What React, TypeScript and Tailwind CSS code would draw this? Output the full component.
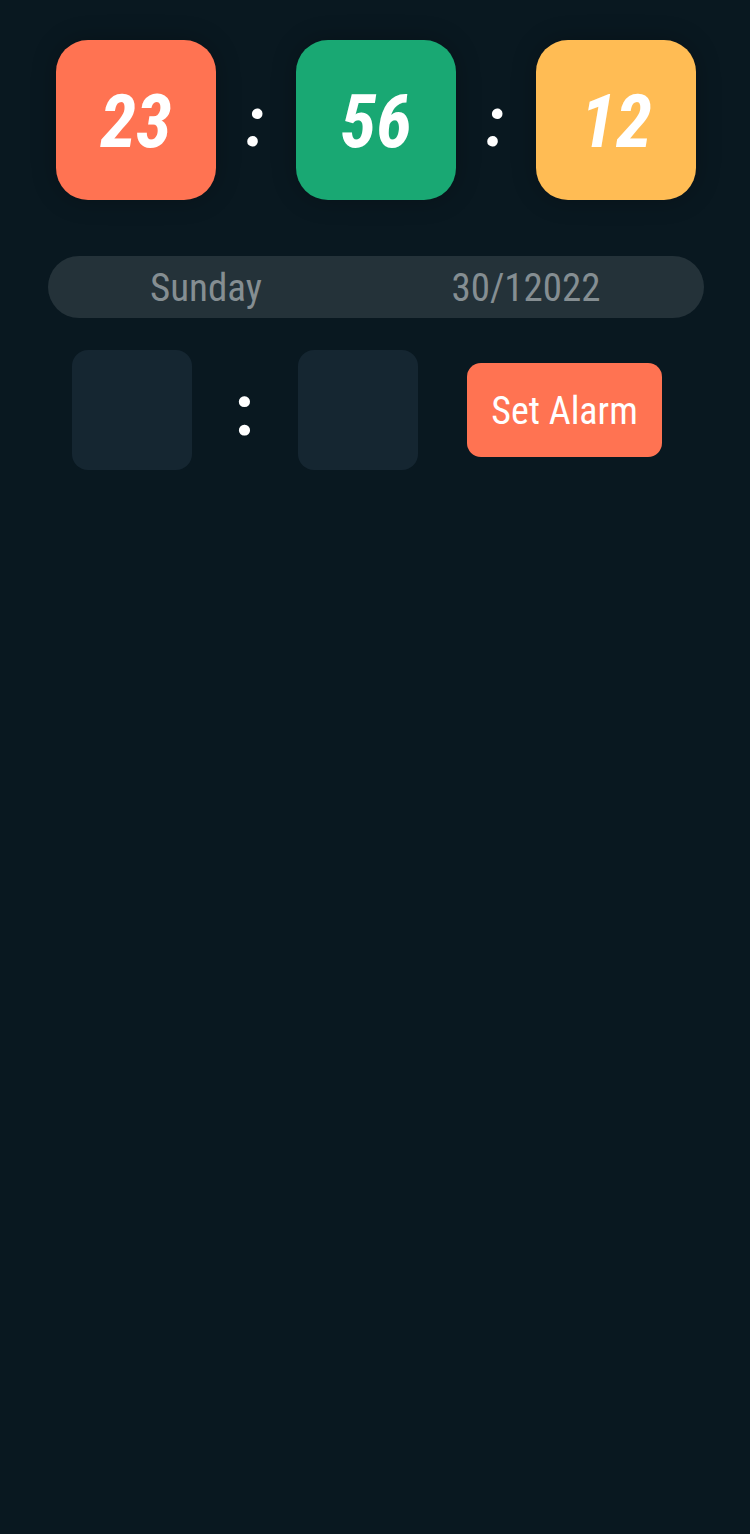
export default function App() {
  const tiles = [
    { value: '23', color: 'bg-[#ff7352]' },
    { value: '56', color: 'bg-[#19a873]' },
    { value: '12', color: 'bg-[#ffbc54]' },
  ]

  return (
    <div className="min-h-[1534px] w-full bg-[#091820] font-['Roboto_Condensed',Roboto,sans-serif]">
      <div className="flex items-center justify-between px-[56px] pt-[40px]">
        {tiles.map((t, i) => (
          <div key={t.value} className="flex items-center">
            {i > 0 && (
              <span className="w-[80px] pr-[2px] pt-[6px] text-center text-[68px] font-bold italic leading-none text-white">:</span>
            )}
            <div
              className={`flex h-[160px] w-[160px] items-center justify-center rounded-[32px] pt-[4px] ${t.color} shadow-[0_0_24px_rgba(0,0,0,0.25)]`}
            >
              <span className="text-[73px] font-bold italic leading-none text-white">{t.value}</span>
            </div>
          </div>
        ))}
      </div>

      <div className="ml-[48px] mt-[56px] flex h-[62px] w-[656px] items-center rounded-full bg-[#243239] pt-[2px] text-[39px] text-[#858e92]">
        <span className="w-1/2 pr-[12px] text-center">Sunday</span>
        <span className="w-1/2 pr-[28px] text-center">30/12022</span>
      </div>

      <div className="mt-[32px] flex items-center pl-[72px]">
        <div className="h-[120px] w-[120px] rounded-[16px] bg-[#152631]" />
        <span className="w-[106px] pr-[2px] pt-[2px] text-center text-[70px] font-bold leading-none text-white">:</span>
        <div className="h-[120px] w-[120px] rounded-[16px] bg-[#152631]" />
        <button className="ml-[49px] flex h-[94px] w-[195px] items-center justify-center rounded-[14px] bg-[#ff7352] pt-[2px] text-[38px] text-white">
          Set Alarm
        </button>
      </div>
    </div>
  )
}
